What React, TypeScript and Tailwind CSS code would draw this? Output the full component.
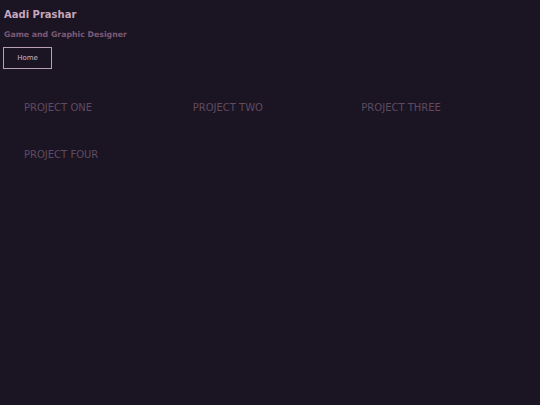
import React from "react";

export default function App() {
  const projects = ["PROJECT ONE", "PROJECT TWO", "PROJECT THREE", "PROJECT FOUR"];
  return (
    <div
      className="w-[540px] h-[405px] bg-[#1b1523] overflow-hidden"
      style={{ fontFamily: '"DejaVu Sans", Verdana, sans-serif' }}
    >
      <div className="pl-[4px] pt-[8px]">
        <h1 className="text-[10px] font-bold leading-[14px] text-[#c8a6bb]">Aadi Prashar</h1>
        <p className="mt-[8px] text-[7.8px] font-bold leading-[10px] text-[#7b5a78]">Game and Graphic Designer</p>
      </div>
      <div className="pl-[3px] mt-[7px]">
        <button className="w-[49px] h-[22px] pt-[1px] border border-[#b9a0b3] text-[7px] text-[#c9b6c6] flex items-center justify-center">
          Home
        </button>
      </div>
      <div className="grid grid-cols-3 pl-[24px] pr-[10px] mt-[32px] gap-y-[33px]">
        {projects.map((p) => (
          <div key={p} className="text-[10px] leading-[14px] text-[#5f4a61]">
            {p}
          </div>
        ))}
      </div>
    </div>
  );
}
